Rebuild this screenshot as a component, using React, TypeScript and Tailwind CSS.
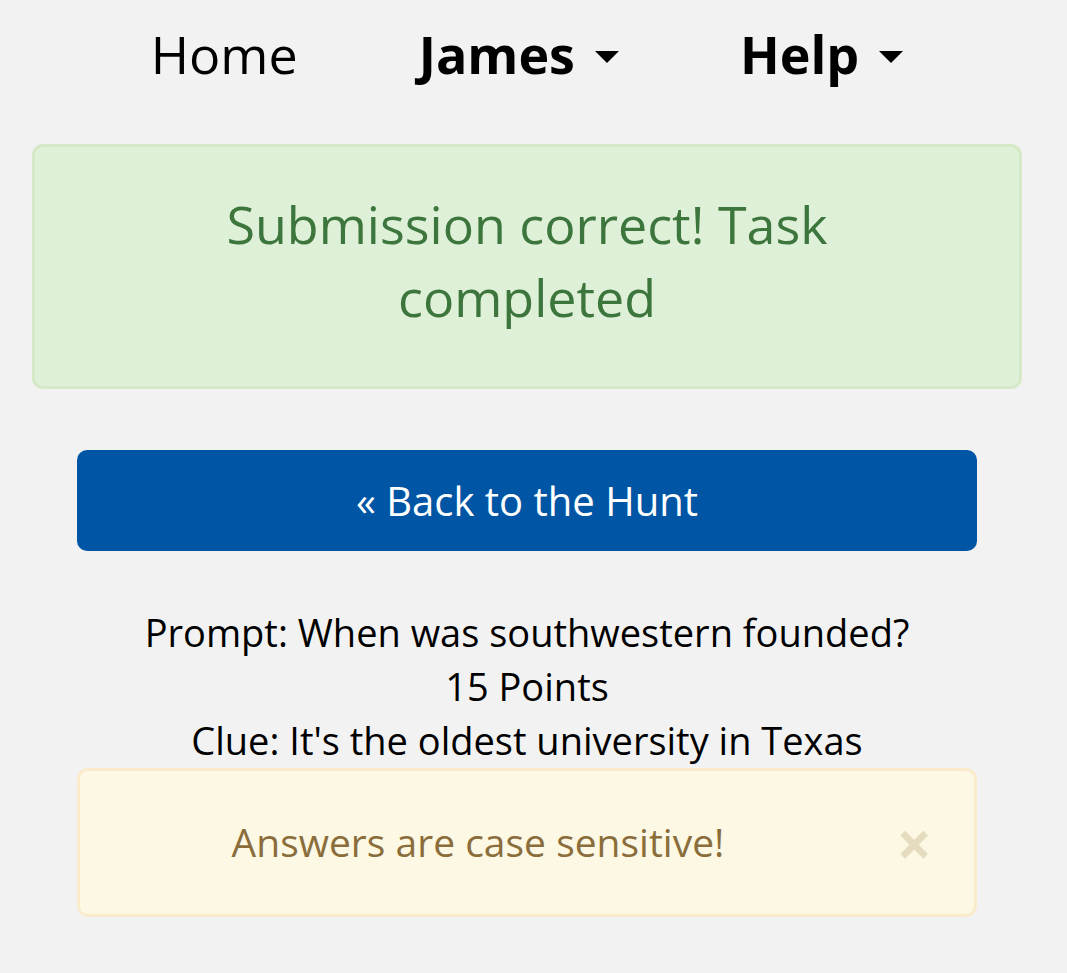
function Caret() {
  return (
    <svg width="24" height="12" viewBox="0 0 24 12" className="ml-[20px] mt-[6px]">
      <path d="M0 0 H24 L12 12 Z" fill="#000" />
    </svg>
  )
}

export default function App() {
  return (
    <div className="min-h-[973px] w-full bg-[#f2f2f2] font-['Open_Sans',sans-serif] text-black">
      <div className="w-[1054px]">
        {/* Nav */}
        <nav className="flex h-[107px] items-center justify-center gap-[121px] text-[52px]">
          <a className="font-normal leading-none">Home</a>
          <a className="flex items-center font-bold leading-none">
            James
            <Caret />
          </a>
          <a className="flex items-center font-bold leading-none">
            Help
            <Caret />
          </a>
        </nav>

        {/* Success alert */}
        <div className="mx-[32px] mt-[37px] rounded-[11px] border-[3px] border-[#d6e9c6] bg-[#dff0d8] px-[140px] pb-[53px] pt-[40px] text-center text-[52px] leading-[73px] text-[#3c763d]">
          Submission correct! Task completed
        </div>

        <div className="mx-[77px] mt-[61px]">
          <button className="flex h-[101px] w-full items-center justify-center rounded-[10px] bg-[#0055a5] text-[40px] text-white">
            « Back to the Hunt
          </button>

          <div className="mt-[54px] text-center text-[38px] leading-[54px]">
            <p>Prompt: When was southwestern founded?</p>
            <p>15 Points</p>
            <p>Clue: It's the oldest university in Texas</p>
          </div>

          {/* Warning alert */}
          <div className="relative mt-[1px] flex h-[149px] items-center justify-center rounded-[11px] border-[3px] border-[#faebcc] bg-[#fcf8e3] pl-[40px] pr-[138px] text-[39px] text-[#8a6d3b]">
            <span>Answers are case sensitive!</span>
            <button className="absolute right-[42px] top-[50%] -translate-y-1/2 text-[62px] font-bold leading-none text-[#e5dcc0]">
              ×
            </button>
          </div>
        </div>
      </div>
    </div>
  )
}
